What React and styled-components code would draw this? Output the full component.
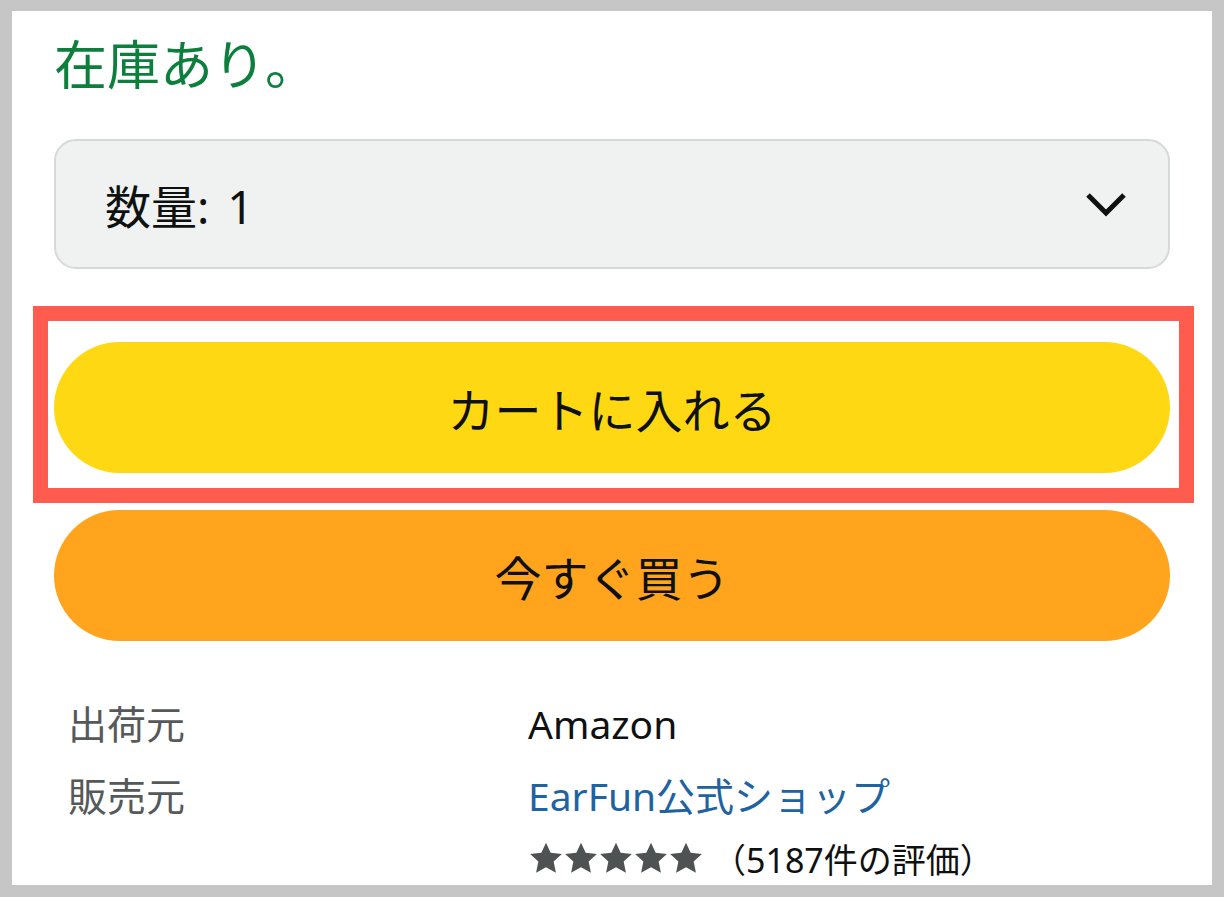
import React from 'react';
import styled, { createGlobalStyle } from 'styled-components';

const GlobalStyle = createGlobalStyle`
  html, body {
    margin: 0;
    padding: 0;
    background: #c6c6c6;
  }
  body {
    font-family: "Noto Sans", "Noto Sans CJK JP", sans-serif;
  }
`;

const Frame = styled.div`
  margin: 11px 12px 12px 12px;
  height: 874px;
  background: #ffffff;
  overflow: hidden;
  padding: 0 42px;
  box-sizing: border-box;
`;

const Stock = styled.div`
  padding-top: 29px;
  margin-bottom: 49px;
  font-size: 53px;
  line-height: 50px;
  color: #0d7f3d;
`;

const Select = styled.div`
  height: 130px;
  box-sizing: border-box;
  border: 2px solid #d5d9d9;
  border-radius: 22px;
  background: #f0f2f2;
  display: flex;
  align-items: center;
  justify-content: space-between;
  padding: 0 41px 0 49px;
  font-size: 46px;
  color: #0f1111;
`;

const Quantity = styled.span`
  word-spacing: 6px;
`;

const Highlight = styled.div`
  margin: 37px -24px 0 -21px;
  border: 15px solid #ff5b4f;
  padding: 21px 9px 15px 6px;
`;

const Button = styled.button`
  display: flex;
  align-items: center;
  justify-content: center;
  width: 100%;
  height: ${(p) => p.$h}px;
  margin-top: ${(p) => p.$top || 0}px;
  border: none;
  border-radius: 66px;
  background: ${(p) => p.$bg};
  font-family: inherit;
  font-size: 47px;
  color: #0f1111;
  padding: 0;
`;

const Details = styled.div`
  margin-top: 47px;
  display: grid;
  grid-template-columns: 460px 1fr;
  padding-left: 14px;
`;

const Label = styled.div`
  font-size: 39px;
  line-height: ${(p) => p.$lh}px;
  color: #565959;
`;

const Value = styled.div`
  font-size: 39px;
  line-height: ${(p) => p.$lh}px;
  color: ${(p) => p.$color || '#0f1111'};
`;

const Rating = styled.div`
  display: flex;
  align-items: center;
  height: 52px;
  gap: 9px;
`;

const Stars = styled.div`
  display: flex;
  gap: 1px;
  margin-left: 1px;
`;

const Count = styled.span`
  font-size: 34px;
  color: #0f1111;
`;

const Star = () => (
  <svg width="34" height="33" viewBox="0 0 24 23">
    <path
      d="M12 0.3l3.3 7.1 7.9 0.9-5.8 5.4 1.6 7.9L12 17.6l-7 4 1.6-7.9L0.8 8.3l7.9-0.9z"
      fill="#4e5252"
    />
  </svg>
);

const Chevron = () => (
  <svg width="42" height="28" viewBox="0 0 42 28">
    <polyline
      points="3,5 21,23 39,5"
      fill="none"
      stroke="#0f1111"
      strokeWidth="5"
    />
  </svg>
);

export default function App() {
  return (
    <>
      <GlobalStyle />
      <Frame>
        <Stock>在庫あり。</Stock>
        <Select>
          <Quantity>数量: 1</Quantity>
          <Chevron />
        </Select>
        <Highlight>
          <Button $bg="#ffd814" $h={131}>カートに入れる</Button>
        </Highlight>
        <Button $bg="#ffa41c" $h={131} $top={7}>今すぐ買う</Button>
        <Details>
          <Label $lh={72}>出荷元</Label>
          <Value $lh={72}>Amazon</Value>
          <Label $lh={72}>販売元</Label>
          <Value $lh={72} $color="#2162a1">EarFun公式ショップ</Value>
          <div />
          <Rating>
            <Stars>
              {[0, 1, 2, 3, 4].map((i) => (
                <Star key={i} />
              ))}
            </Stars>
            <Count>（5187件の評価）</Count>
          </Rating>
        </Details>
      </Frame>
    </>
  );
}
